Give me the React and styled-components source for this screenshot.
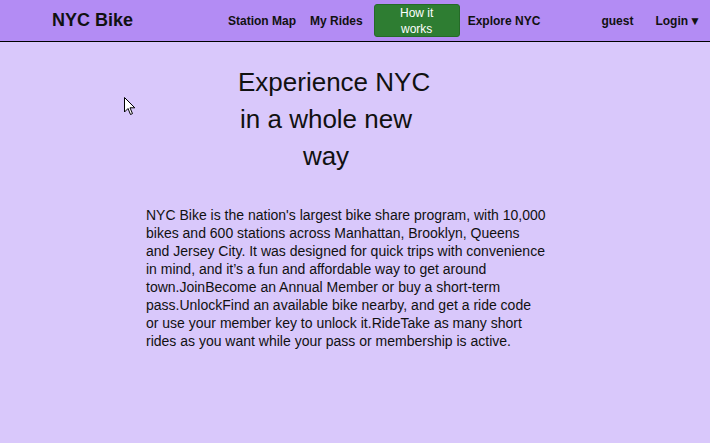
import React from 'react';
import styled, { createGlobalStyle } from 'styled-components';

const GlobalStyle = createGlobalStyle`
  html, body {
    margin: 0;
    padding: 0;
    height: 100%;
    background: #d9c8fb;
    font-family: "Liberation Sans", Arial, sans-serif;
  }
  #root {
    min-height: 100%;
  }
`;

const Page = styled.div`
  position: relative;
  min-height: 443px;
  background: #d9c8fb;
  color: #111;
`;

const NavBar = styled.nav`
  display: flex;
  align-items: center;
  height: 41px;
  background: #b38cf4;
  border-bottom: 1px solid #000;
  box-sizing: content-box;
`;

const Brand = styled.div`
  font-size: 18px;
  font-weight: bold;
  margin-left: 52px;
  width: 176px;
`;

const NavLinks = styled.div`
  display: flex;
  align-items: center;
  flex: 1;
  height: 100%;
`;

const NavLink = styled.a`
  font-size: 12px;
  font-weight: bold;
  color: #111;
  text-decoration: none;
  margin-right: ${p => p.$gap || 0}px;
  white-space: nowrap;
`;

const ActiveButton = styled.button`
  width: 86px;
  height: 33px;
  background: #2e7d32;
  border: 1px solid #256a28;
  border-radius: 3px;
  color: #fff;
  font-family: "Liberation Sans", Arial, sans-serif;
  font-size: 12px;
  line-height: 16px;
  padding: 0 14px;
  margin: 0 8px 0 11px;
`;

const Spacer = styled.div`
  flex: 1;
`;

const Caret = styled.span`
  font-size: 12px;
  margin-left: 1px;
`;

const Main = styled.main`
  display: flex;
  flex-direction: column;
  padding-top: 22px;
`;

const Heading = styled.h1`
  margin: 0 0 0 238px;
  width: 176px;
  font-size: 26px;
  font-weight: normal;
  line-height: 37px;
  text-align: center;
`;

const Intro = styled.p`
  margin: 31px 0 0 146px;
  width: 420px;
  font-size: 14px;
  line-height: 18px;
`;

const IntroLine = styled.span`
  display: block;
  white-space: nowrap;
`;

const Cursor = styled.svg`
  position: absolute;
  left: 124px;
  top: 97px;
`;

const introLines = [
  "NYC Bike is the nation's largest bike share program, with 10,000",
  'bikes and 600 stations across Manhattan, Brooklyn, Queens',
  'and Jersey City. It was designed for quick trips with convenience',
  'in mind, and it’s a fun and affordable way to get around',
  'town.JoinBecome an Annual Member or buy a short-term',
  'pass.UnlockFind an available bike nearby, and get a ride code',
  'or use your member key to unlock it.RideTake as many short',
  'rides as you want while your pass or membership is active.',
];

export default function App() {
  return (
    <>
      <GlobalStyle />
      <Page>
        <NavBar>
          <Brand>NYC Bike</Brand>
          <NavLinks>
            <NavLink href="#" $gap={14}>Station Map</NavLink>
            <NavLink href="#">My Rides</NavLink>
            <ActiveButton>How it works</ActiveButton>
            <NavLink href="#">Explore NYC</NavLink>
            <Spacer />
            <NavLink href="#" $gap={22}>guest</NavLink>
            <NavLink href="#" $gap={9}>Login<Caret>▼</Caret></NavLink>
          </NavLinks>
        </NavBar>
        <Main>
          <Heading>Experience{'\u00a0'}NYC in a whole new way</Heading>
          <Intro>
            {introLines.map((line, i) => (
              <IntroLine key={i}>{line}</IntroLine>
            ))}
          </Intro>
        </Main>
        <Cursor width="12" height="19" viewBox="0 0 12 19">
          <path d="M0.5 0.5 L0.5 15 L4 11.5 L6.5 17.5 L8.5 16.6 L6 10.8 L10.8 10.8 Z" fill="#fff" stroke="#000" strokeWidth="1" strokeLinejoin="round" />
        </Cursor>
      </Page>
    </>
  );
}
